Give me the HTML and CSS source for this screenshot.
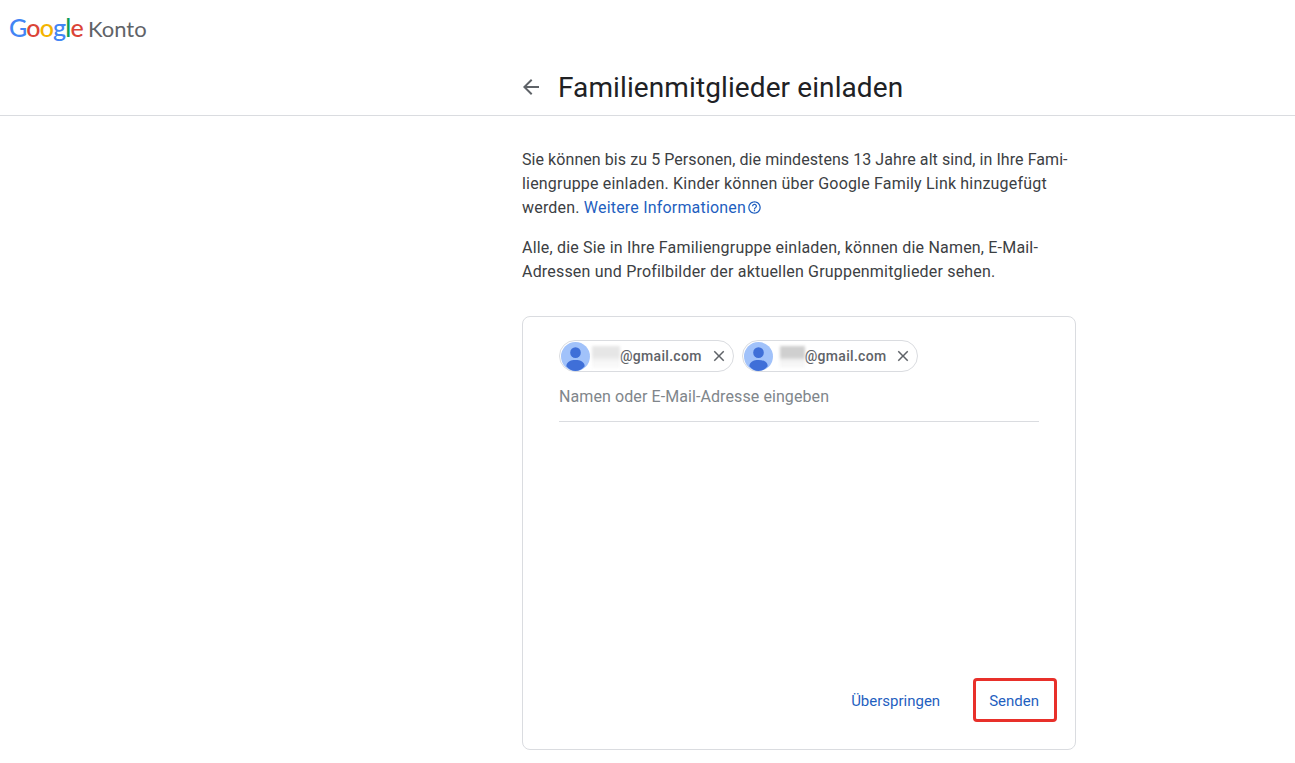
FILE: index.html
```html
<!DOCTYPE html>
<html lang="de">
<head>
  <meta charset="UTF-8">
  <title>Familienmitglieder einladen</title>
  <link rel="stylesheet" href="styles.css">
</head>
<body>
  <header class="top">
    <div class="brand">
      <span class="logo"><span class="g-blue">G</span><span class="g-red">o</span><span class="g-yellow">o</span><span class="g-blue">g</span><span class="g-green">l</span><span class="g-red">e</span></span>
      <span class="product">Konto</span>
    </div>
    <div class="title-row">
      <svg class="back" viewBox="0 0 24 24" width="24" height="24"><path d="M20 11H7.8l5.6-5.6L12 4l-8 8 8 8 1.4-1.4L7.8 13H20z"/></svg>
      <h1>Familienmitglieder einladen</h1>
    </div>
  </header>

  <main class="content">
    <p><span class="tight">Sie können bis zu 5 Personen, die mindestens 13 Jahre alt sind, in Ihre Fami-</span><br>liengruppe einladen. Kinder können über Google Family Link hinzugefügt<br>werden. <a class="link" href="#">Weitere Informationen<svg class="help" viewBox="0 0 24 24" width="15" height="15"><path d="M11 18h2v-2h-2v2zm1-16C6.5 2 2 6.5 2 12s4.5 10 10 10 10-4.5 10-10S17.500 2 12 2zm0 18c-4.400 0-8-3.600-8-8s3.600-8 8-8 8 3.600 8 8-3.600 8-8 8zm0-14c-2.200 0-4 1.800-4 4h2c0-1.100.9-2 2-2s2 .9 2 2c0 2-3 1.750-3 5h2c0-2.250 3-2.500 3-5 0-2.200-1.800-4-4-4z"/></svg></a></p>
    <p>Alle, die Sie in Ihre Familiengruppe einladen, können die Namen, E-Mail-<br>Adressen und Profilbilder der aktuellen Gruppenmitglieder sehen.</p>

    <section class="card">
      <div class="chips">
        <div class="chip">
          <svg class="avatar" viewBox="0 0 30 30" width="29" height="29"><circle cx="15" cy="15" r="15" fill="#a1c2fa"/><circle cx="15" cy="11" r="5.500" fill="#3f6fd8"/><path d="M5.500 25c0-4.500 4.500-6.500 9.500-6.500s9.500 2 9.500 6.500c-2.500 3-6 5-9.500 5s-7-2-9.500-5z" fill="#3f6fd8"/></svg>
          <span class="blur blur-one"></span>
          <span class="address">@gmail.com</span>
          <svg class="close" viewBox="0 0 24 24" width="18" height="18"><path d="M19 6.400 17.600 5 12 10.600 6.400 5 5 6.400 10.600 12 5 17.600 6.400 19l5.600-5.600 5.600 5.600 1.400-1.400-5.600-5.600z"/></svg>
        </div>
        <div class="chip">
          <svg class="avatar" viewBox="0 0 30 30" width="29" height="29"><circle cx="15" cy="15" r="15" fill="#a1c2fa"/><circle cx="15" cy="11" r="5.500" fill="#3f6fd8"/><path d="M5.500 25c0-4.500 4.500-6.500 9.500-6.500s9.500 2 9.500 6.500c-2.500 3-6 5-9.500 5s-7-2-9.500-5z" fill="#3f6fd8"/></svg>
          <span class="blur blur-two"></span>
          <span class="address">@gmail.com</span>
          <svg class="close" viewBox="0 0 24 24" width="18" height="18"><path d="M19 6.400 17.600 5 12 10.600 6.400 5 5 6.400 10.600 12 5 17.600 6.400 19l5.600-5.600 5.600 5.600 1.400-1.400-5.600-5.600z"/></svg>
        </div>
      </div>
      <div class="field">Namen oder E-Mail-Adresse eingeben</div>
      <div class="actions">
        <button class="btn">Überspringen</button>
        <button class="btn btn-marked">Senden</button>
      </div>
    </section>
  </main>
</body>
</html>
```

FILE: styles.css
```css
* {
  box-sizing: border-box;
}
body {
  margin: 0;
  background: #fff;
  color: #3c4043;
  font-family: 'Roboto', sans-serif;
  height: 763px;
  overflow: hidden;
}
.top {
  height: 116px;
  border-bottom: 1px solid #dadce0;
}
.brand {
  display: flex;
  align-items: baseline;
  height: 58px;
  padding: 10px 0 0 9px;
}
.logo {
  font-family: 'Lato', sans-serif;
  font-size: 25px;
  font-weight: 500;
  letter-spacing: -.8px;
  line-height: 34px;
}
.g-blue { color: #4285f4; }
.g-red { color: #db4437; }
.g-yellow { color: #f4b400; }
.g-green { color: #0f9d58; }
.product {
  font-family: 'Lato', sans-serif;
  font-size: 22px;
  color: #5f6368;
  margin-left: 5px;
}
.title-row {
  display: flex;
  align-items: center;
  padding-left: 519px;
  height: 58px;
}
.back {
  fill: #5f6368;
  margin-right: 15px;
}
h1 {
  margin: 0;
  font-size: 28px;
  font-weight: 400;
  letter-spacing: .1px;
  color: #202124;
}
.content {
  width: 554px;
  margin-left: 522px;
  padding-top: 32px;
}
p {
  margin: 0 0 16px;
  font-size: 16px;
  line-height: 24px;
  letter-spacing: .19px;
  white-space: nowrap;
}
.tight {
  letter-spacing: .07px;
}
.link {
  color: #1f5fbf;
  text-decoration: none;
}
.help {
  fill: #1f5fbf;
  margin-left: 1px;
  vertical-align: -2px;
}
.card {
  margin-top: 32px;
  height: 434px;
  border: 1px solid #dadce0;
  border-radius: 8px;
  padding: 23px 36px 0;
  display: flex;
  flex-direction: column;
}
.chips {
  display: flex;
  gap: 8px;
}
.chip {
  display: flex;
  align-items: center;
  height: 32px;
  padding: 0 5px 0 1px;
  border: 1px solid #dadce0;
  border-radius: 16px;
  font-size: 14px;
  font-weight: 500;
  letter-spacing: .3px;
  color: #5f6368;
}
.avatar {
  flex: none;
}
.blur {
  height: 22px;
  margin-top: 2px;
  filter: blur(1.5px);
}
.blur-one {
  width: 28px;
  margin-left: 2px;
  background: linear-gradient(#e6e6e6 45%, #f6f6f6 70%, #fafafa);
}
.blur-two {
  width: 25px;
  margin-left: 7px;
  background: linear-gradient(#cfcfcf 50%, #f2f2f2 65%, #fafafa);
}
.address {
  margin-right: 8px;
}
.close {
  fill: #5f6368;
}
.field {
  margin-top: 12px;
  height: 38px;
  border-bottom: 1px solid #dadce0;
  font-size: 16px;
  line-height: 26px;
  letter-spacing: .09px;
  color: #80868b;
}
.actions {
  margin-top: auto;
  margin-bottom: 27px;
  margin-right: -18px;
  display: flex;
  justify-content: flex-end;
  align-items: center;
  gap: 15px;
}
.btn {
  background: none;
  border: 3px solid transparent;
  border-radius: 4px;
  height: 44px;
  padding: 2px 15px 0 13px;
  font-family: 'Roboto', sans-serif;
  font-size: 15px;
  font-weight: 400;
  color: #1f5fbf;
}
.btn-marked {
  border-color: #e8302a;
}
```
